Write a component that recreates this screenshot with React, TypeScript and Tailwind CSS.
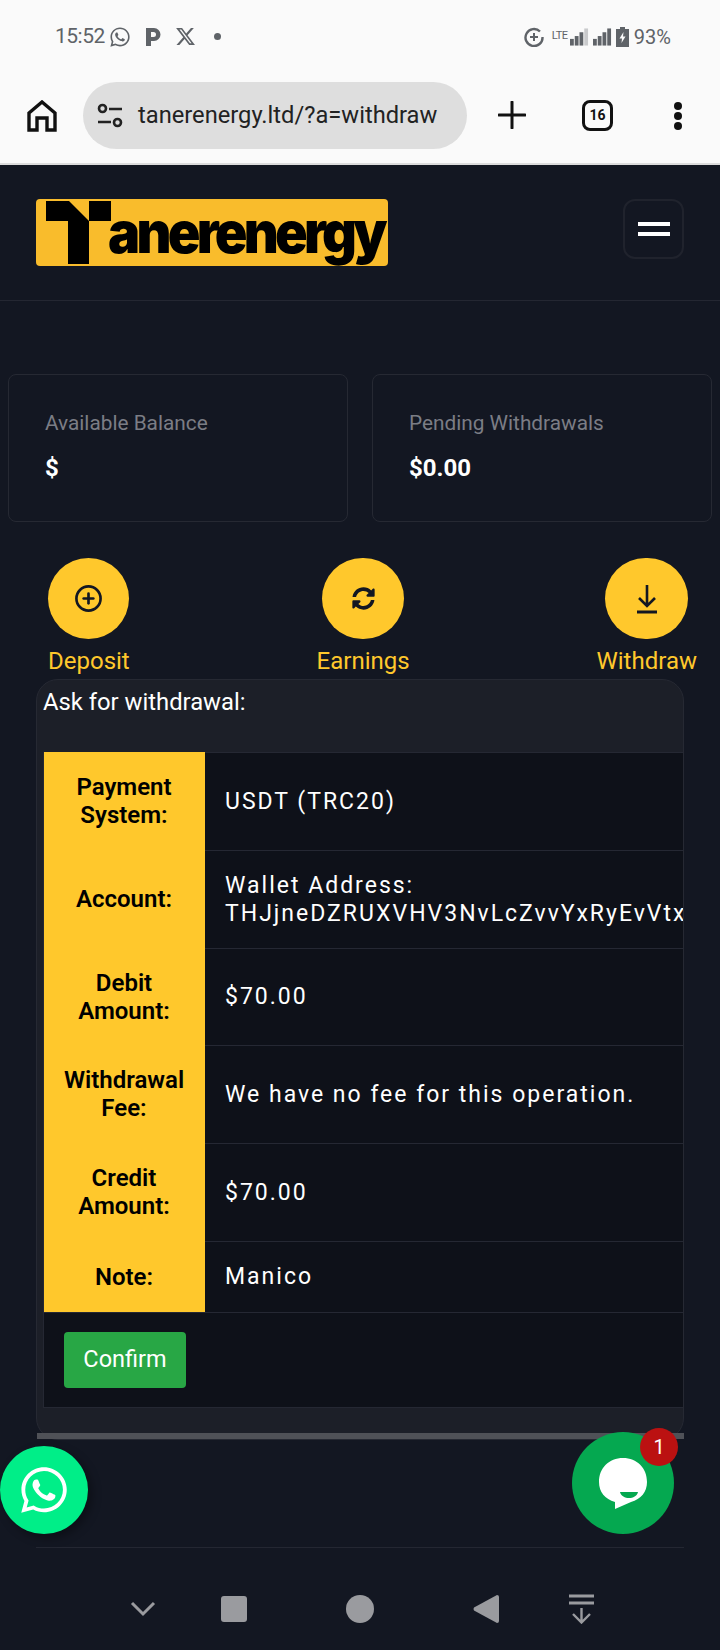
import { CirclePlus } from 'lucide-react';
import { FaSyncAlt, FaWhatsapp } from 'react-icons/fa';
import { FaXTwitter } from 'react-icons/fa6';

const rows = [
  { label: ['Payment', 'System:'], value: ['USDT (TRC20)'], height: 'h-[98px]' },
  { label: ['Account:'], value: ['Wallet Address:', 'THJjneDZRUXVHV3NvLcZvvYxRyEvVtx'], height: 'h-[98px]' },
  { label: ['Debit', 'Amount:'], value: ['$70.00'], height: 'h-[97px]' },
  { label: ['Withdrawal', 'Fee:'], value: ['We have no fee for this operation.'], height: 'h-[98px]' },
  { label: ['Credit', 'Amount:'], value: ['$70.00'], height: 'h-[98px]' },
  { label: ['Note:'], value: ['Manico'], height: 'h-[71px]' },
];

function Signal({ dim }: { dim?: boolean }) {
  return (
    <svg width="19" height="18" viewBox="0 0 20 18" fill="#5f6368">
      <rect x="0" y="11" width="4" height="7" />
      <rect x="5" y="8" width="4" height="10" />
      <rect x="10" y="4" width="4" height="14" />
      <rect x="15" y="0" width="4" height="18" fill={dim ? '#c9cacc' : '#5f6368'} />
    </svg>
  );
}

function StatusBar() {
  return (
    <div className="h-[73px] flex items-center text-[#5f6368]">
      <span className="ml-[55px] text-[21px] tracking-[-0.5px] w-[54px]">15:52</span>
      <FaWhatsapp className="text-[22px]" />
      <svg className="ml-[14px]" width="16" height="20" viewBox="0 0 16 20" fill="#5f6368">
        <path d="M1 1h8a6.500 6.500 0 0 1 0 13H6v5H1zM6 5v5h2.500a2.500 2.500 0 0 0 0-5z" fillRule="evenodd" />
      </svg>
      <FaXTwitter className="ml-[14px] text-[21px]" />
      <span className="ml-[18px] w-[7px] h-[7px] rounded-full bg-[#5f6368]" />
      <div className="ml-auto mr-[49px] flex items-center">
        <svg width="20" height="20" viewBox="0 0 20 20" fill="none" stroke="#5f6368" strokeWidth="2.400">
          <path d="M16 4.500A8.500 8.500 0 1 0 18.500 10" />
          <path d="M10 6v8M6 10h8" strokeWidth="2" />
        </svg>
        <span className="ml-[8px] text-[11px] w-[18px] tracking-[-0.5px]">LTE</span>
        <Signal dim />
        <span className="w-[4px]" />
        <Signal />
        <svg className="ml-[4px]" width="13" height="20" viewBox="0 0 13 20" fill="#5f6368">
          <path d="M4 0h5v2h4v18H0V2h4z" />
          <path d="M7.500 5 3.500 11.500H6L5.500 16 9.500 9.500H7z" fill="#fafafa" />
        </svg>
        <span className="ml-[5px] text-[20px]">93%</span>
      </div>
    </div>
  );
}

function Toolbar() {
  return (
    <div className="h-[92px] flex items-start pt-[9px] border-b-2 border-[#dcdcdc]">
      <svg className="ml-[27px] mt-[18px]" width="30" height="32" viewBox="0 0 30 32" fill="none" stroke="#111" strokeWidth="3.400">
        <path d="M2 13 15 2l13 11v17h-8v-12h-10v12H2z" />
      </svg>
      <div className="ml-[26px] w-[384px] h-[67px] rounded-full bg-[#dedede] flex items-center">
        <svg className="ml-[13px]" width="28" height="28" viewBox="0 0 28 28" fill="none" stroke="#222" strokeWidth="2.600">
          <circle cx="6.500" cy="6.500" r="3.500" />
          <path d="M13 7h13M2 20h13" />
          <circle cx="21.500" cy="20.500" r="3.500" />
        </svg>
        <span className="ml-[14px] text-[23.700px] text-[#222]">tanerenergy.ltd/?a=withdraw</span>
      </div>
      <svg className="ml-[31px] mt-[19px]" width="28" height="28" viewBox="0 0 28 28" stroke="#111" strokeWidth="3" strokeLinecap="round">
        <path d="M14 1v26M1 14h26" />
      </svg>
      <div className="ml-[56px] mt-[18px] w-[31px] h-[31px] rounded-[8px] border-[3px] border-[#111] flex items-center justify-center text-[14px] font-bold text-[#111]">
        16
      </div>
      <div className="ml-[61px] mt-[20px] flex flex-col gap-[2px]">
        <span className="w-[8px] h-[8px] rounded-full bg-[#111]" />
        <span className="w-[8px] h-[8px] rounded-full bg-[#111]" />
        <span className="w-[8px] h-[8px] rounded-full bg-[#111]" />
      </div>
    </div>
  );
}

function SiteHeader() {
  return (
    <div className="h-[136px] pt-[34px] pl-[36px] pr-[36px] flex items-start justify-between border-b border-[#242732]">
      <div className="w-[352px] h-[67px] rounded-[4px] bg-[#f9bc2c] flex overflow-hidden relative">
        <svg className="ml-[10px] mt-[2px] shrink-0" width="65" height="63" viewBox="0 0 65 63">
          <path d="M0 0H23L43 20V0H65V20H43V63H22V20H0Z" fill="#000" />
        </svg>
        <span className="ml-[-3px] mt-[-4px] text-[58px] leading-[74px] font-black tracking-[-4px] scale-x-[0.93] origin-left text-black font-['Inter',sans-serif]">
          anerenergy
        </span>
      </div>
      <button className="w-[61px] h-[60px] rounded-[12px] border-2 border-[#20232d] flex flex-col items-center justify-center gap-[6px]">
        <span className="w-[32px] h-[4px] bg-white" />
        <span className="w-[32px] h-[4px] bg-white" />
      </button>
    </div>
  );
}

function StatCard({ label, value }: { label: string; value: string }) {
  return (
    <div className="flex-1 h-[148px] rounded-[8px] border border-[#262933] pl-[36px] pt-[34px]">
      <div className="text-[20.800px] leading-[28px] text-[#7b7d85]">{label}</div>
      <div className="mt-[16px] text-[24px] leading-[30px] font-bold text-white">{value}</div>
    </div>
  );
}

function Action({ label, size, icon }: { label: string; size: string; icon: React.ReactNode }) {
  return (
    <div className="flex flex-col items-center">
      <div className={`${size} h-[81px] rounded-full bg-[#ffc82c] flex items-center justify-center text-[#131722]`}>
        {icon}
      </div>
      <span className="mt-[6px] text-[24px] leading-[32px] text-[#ffc82c]">{label}</span>
    </div>
  );
}

function Table() {
  return (
    <div className="ml-[6px] bg-[#0e1119] border-l border-[#252833] h-[656px] overflow-hidden">
      {rows.map((row, i) => (
        <div key={i} className={`flex ${row.height}`}>
          <div className="w-[162px] shrink-0 -ml-px bg-[#ffc82c] flex flex-col items-center justify-center text-[24px] leading-[28px] font-semibold text-black text-center">
            {row.label.map(line => <span key={line}>{line}</span>)}
          </div>
          <div className="flex-1 min-w-0 border-t border-[#252833] pl-[20px] flex flex-col justify-center text-[23px] leading-[28px] tracking-[2px] text-white whitespace-nowrap overflow-hidden">
            {row.value.map(line => <span key={line}>{line}</span>)}
          </div>
        </div>
      ))}
      <div className="h-[96px] border-t border-b border-[#252833] pl-[20px] pt-[19px]">
        <button className="w-[122px] h-[56px] rounded-[4px] bg-[#28a745] text-white text-[23.500px]">Confirm</button>
      </div>
    </div>
  );
}

export default function App() {
  return (
    <div className="relative h-[1650px] overflow-hidden bg-[#131722] font-['Roboto',sans-serif]">
      <div className="bg-[#fafafa]">
        <StatusBar />
        <Toolbar />
      </div>
      <SiteHeader />

      <div className="mt-[73px] px-[8px] flex gap-[24px]">
        <StatCard label="Available Balance" value="$" />
        <StatCard label="Pending Withdrawals" value="$0.00" />
      </div>

      <div className="mt-[36px] pl-[48px] pr-[23px] flex justify-between">
        <Action label="Deposit" size="w-[81px]" icon={<CirclePlus size={29} strokeWidth={2.2} />} />
        <Action label="Earnings" size="w-[82px]" icon={<FaSyncAlt size={23} />} />
        <Action
          label="Withdraw"
          size="w-[83px]"
          icon={
            <svg width="24" height="30" viewBox="0 0 24 30" fill="none" stroke="currentColor" strokeWidth="2.600">
              <path d="M12 1v20M4 14l8 8 8-8" />
              <path d="M2 28h20" strokeWidth="3" />
            </svg>
          }
        />
      </div>

      <div className="relative mx-[36px] mt-[2px] h-[761px]">
        <div className="h-full rounded-[22px] border border-[#262933] bg-[#1c1f28] overflow-hidden">
          <div className="h-[72px] pl-[6px] pt-[5px] text-[23.800px] leading-[34px] text-white">Ask for withdrawal:</div>
          <Table />
        </div>
        <div className="absolute left-[1px] right-0 bottom-[1px] h-[6px] bg-[#4f5157]" />
      </div>

      <div className="mx-[36px] mt-[107px] border-t border-[#242732]" />

      <div className="mt-[45px] flex items-center h-[32px]">
        <svg className="ml-[130px]" width="26" height="16" viewBox="0 0 26 16" fill="none" stroke="#9a9b9f" strokeWidth="3">
          <path d="m2 2 11 11L24 2" />
        </svg>
        <span className="ml-[65px] w-[26px] h-[26px] rounded-[3px] bg-[#9a9b9f]" />
        <span className="ml-[99px] w-[28px] h-[28px] rounded-full bg-[#9a9b9f]" />
        <svg className="ml-[99px]" width="26" height="28" viewBox="0 0 26 28" fill="#9a9b9f">
          <path d="M24 0q2 0 2 2v24q0 2-2 2L1 15.500q-1-1.500 0-3z" />
        </svg>
        <svg className="ml-[69px]" width="27" height="30" viewBox="0 0 27 30" fill="none" stroke="#9a9b9f" strokeWidth="3">
          <path d="M1 2h25M1 9h25" />
          <path d="M13.500 14v14M5 20l8.500 8.500L22 20" strokeWidth="2.400" />
        </svg>
      </div>

      {/* floating buttons */}
      <div className="absolute left-0 top-[1446px] w-[88px] h-[88px] rounded-full bg-[#00ee88] flex items-center justify-center shadow-[4px_4px_10px_rgba(0,0,0,0.35)]">
        <FaWhatsapp className="text-white text-[52px]" />
      </div>
      <div className="absolute left-[572px] top-[1432px] w-[102px] h-[102px] rounded-full bg-[#05a850] flex items-center justify-center">
        <svg width="48" height="51" viewBox="0 0 48 51">
          <path d="M24 0C10 0 0 10 0 24c0 10 6 17 16 20v7l16-7c10-3 16-10 16-20C48 10 38 0 24 0z" fill="#fff" />
          <path d="M21 34h18c-1 4-5 6-9 6s-8-2-9-6z" fill="#05a850" />
        </svg>
      </div>
      <div className="absolute left-[640px] top-[1428px] w-[38px] h-[38px] rounded-full bg-[#bb1111] flex items-center justify-center text-white text-[20px]">
        1
      </div>
    </div>
  );
}
